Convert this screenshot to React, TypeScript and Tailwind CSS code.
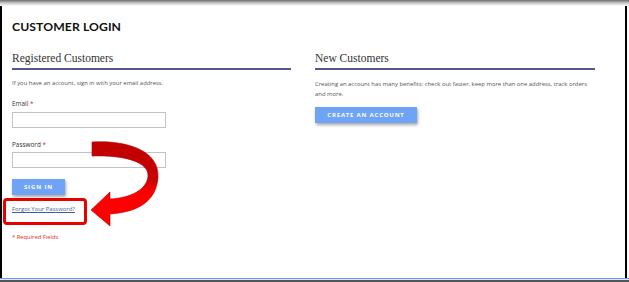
import React from 'react'

const sans = { fontFamily: '"Open Sans", "Liberation Sans", sans-serif' }
const serif = { fontFamily: '"Liberation Serif", serif' }

function Arrow() {
  return (
    <svg className="absolute left-0 top-0 pointer-events-none" width="629" height="282" viewBox="0 0 629 282">
      <defs>
        <linearGradient id="arrowFill" x1="0" y1="140" x2="0" y2="226" gradientUnits="userSpaceOnUse">
          <stop offset="0" stopColor="#c00000" />
          <stop offset="0.45" stopColor="#c80000" />
          <stop offset="0.62" stopColor="#ff0000" />
          <stop offset="1" stopColor="#ff0000" />
        </linearGradient>
      </defs>
      <path
        d="M 92 142 C 126 140, 160 150, 158 178 C 156 200, 140 212, 110 214 L 110 226 L 91 210 L 110 192 L 110 199 C 130 198, 147 190, 148 176 C 149 162, 125 155, 92 156 Z"
        fill="url(#arrowFill)"
        stroke="#b00000"
        strokeWidth="0.6"
      />
    </svg>
  )
}

export default function App() {
  return (
    <div className="relative w-[629px] h-[282px] bg-white overflow-hidden">
      <div className="h-[6px] bg-gradient-to-b from-[#6e6e6e] via-[#c8c8c8] to-white"></div>

      <div className="w-[627px] h-[272px] border-l-2 border-r-2 border-black pl-[10px] pr-[30px] pt-[15px]">
        <h1 className="text-[12.2px] leading-none font-bold text-[#111] tracking-[0.1px]" style={{ fontFamily: 'Lato, "Liberation Sans", sans-serif' }}>
          CUSTOMER LOGIN
        </h1>

        <div className="flex gap-[24px] mt-[20px]">
          {/* Registered */}
          <div className="w-[279px]">
            <h2 className="text-[11.5px] leading-none text-[#333] pb-[3px] border-b-2 border-[#55578c]" style={serif}>
              Registered Customers
            </h2>
            <p className="text-[5.9px] leading-none text-[#555] mt-[11.5px]" style={sans}>
              If you have an account, sign in with your email address.
            </p>

            <label className="block text-[6.4px] leading-none text-[#333] mt-[13.5px]" style={sans}>
              Email <span className="text-[#e02b27]">*</span>
            </label>
            <div className="w-[154px] h-[16px] border border-[#c2c2c2] mt-[5px] bg-white"></div>

            <label className="block text-[6.4px] leading-none text-[#333] mt-[14px]" style={sans}>
              Password <span className="text-[#e02b27]">*</span>
            </label>
            <div className="w-[154px] h-[16px] border border-[#c2c2c2] mt-[3.5px] bg-white"></div>

            <button className="block mt-[11px] w-[53px] h-[16.5px] bg-[#6ea3f6] text-white text-[6px] font-bold tracking-[0.9px] shadow-[1px_2px_3px_rgba(0,0,0,0.35)]" style={sans}>
              SIGN IN
            </button>

            <p className="text-[5.9px] leading-none text-[#3d5f9e] underline mt-[12px]" style={sans}>
              Forgot Your Password?
            </p>

            <p className="text-[5.8px] leading-none text-[#e02b27] mt-[21.5px]" style={sans}>
              * Required Fields
            </p>
          </div>

          {/* New */}
          <div className="w-[280px]">
            <h2 className="text-[11.5px] leading-none text-[#333] pb-[3px] border-b-2 border-[#55578c]" style={serif}>
              New Customers
            </h2>
            <p className="w-[274px] text-[5.9px] leading-[10px] text-[#555] mt-[9px]" style={sans}>
              Creating an account has many benefits: check out faster, keep more than one address, track orders and more.
            </p>
            <button className="block mt-[8.5px] w-[102px] h-[16px] bg-[#6ea3f6] text-white text-[6px] font-bold tracking-[0.8px] shadow-[1px_2px_3px_rgba(0,0,0,0.35)]" style={sans}>
              CREATE AN ACCOUNT
            </button>
          </div>
        </div>
      </div>

      <div className="h-[1px] bg-[#6f96dc]"></div>
      <div className="h-[1px] bg-[#dfe7f5]"></div>
      <div className="h-[2px] bg-[#555]"></div>

      <div className="absolute left-[3px] top-[198px] w-[84px] h-[27px] border-[3px] border-[#e60000] rounded-[4px]"></div>
      <Arrow />
    </div>
  )
}
